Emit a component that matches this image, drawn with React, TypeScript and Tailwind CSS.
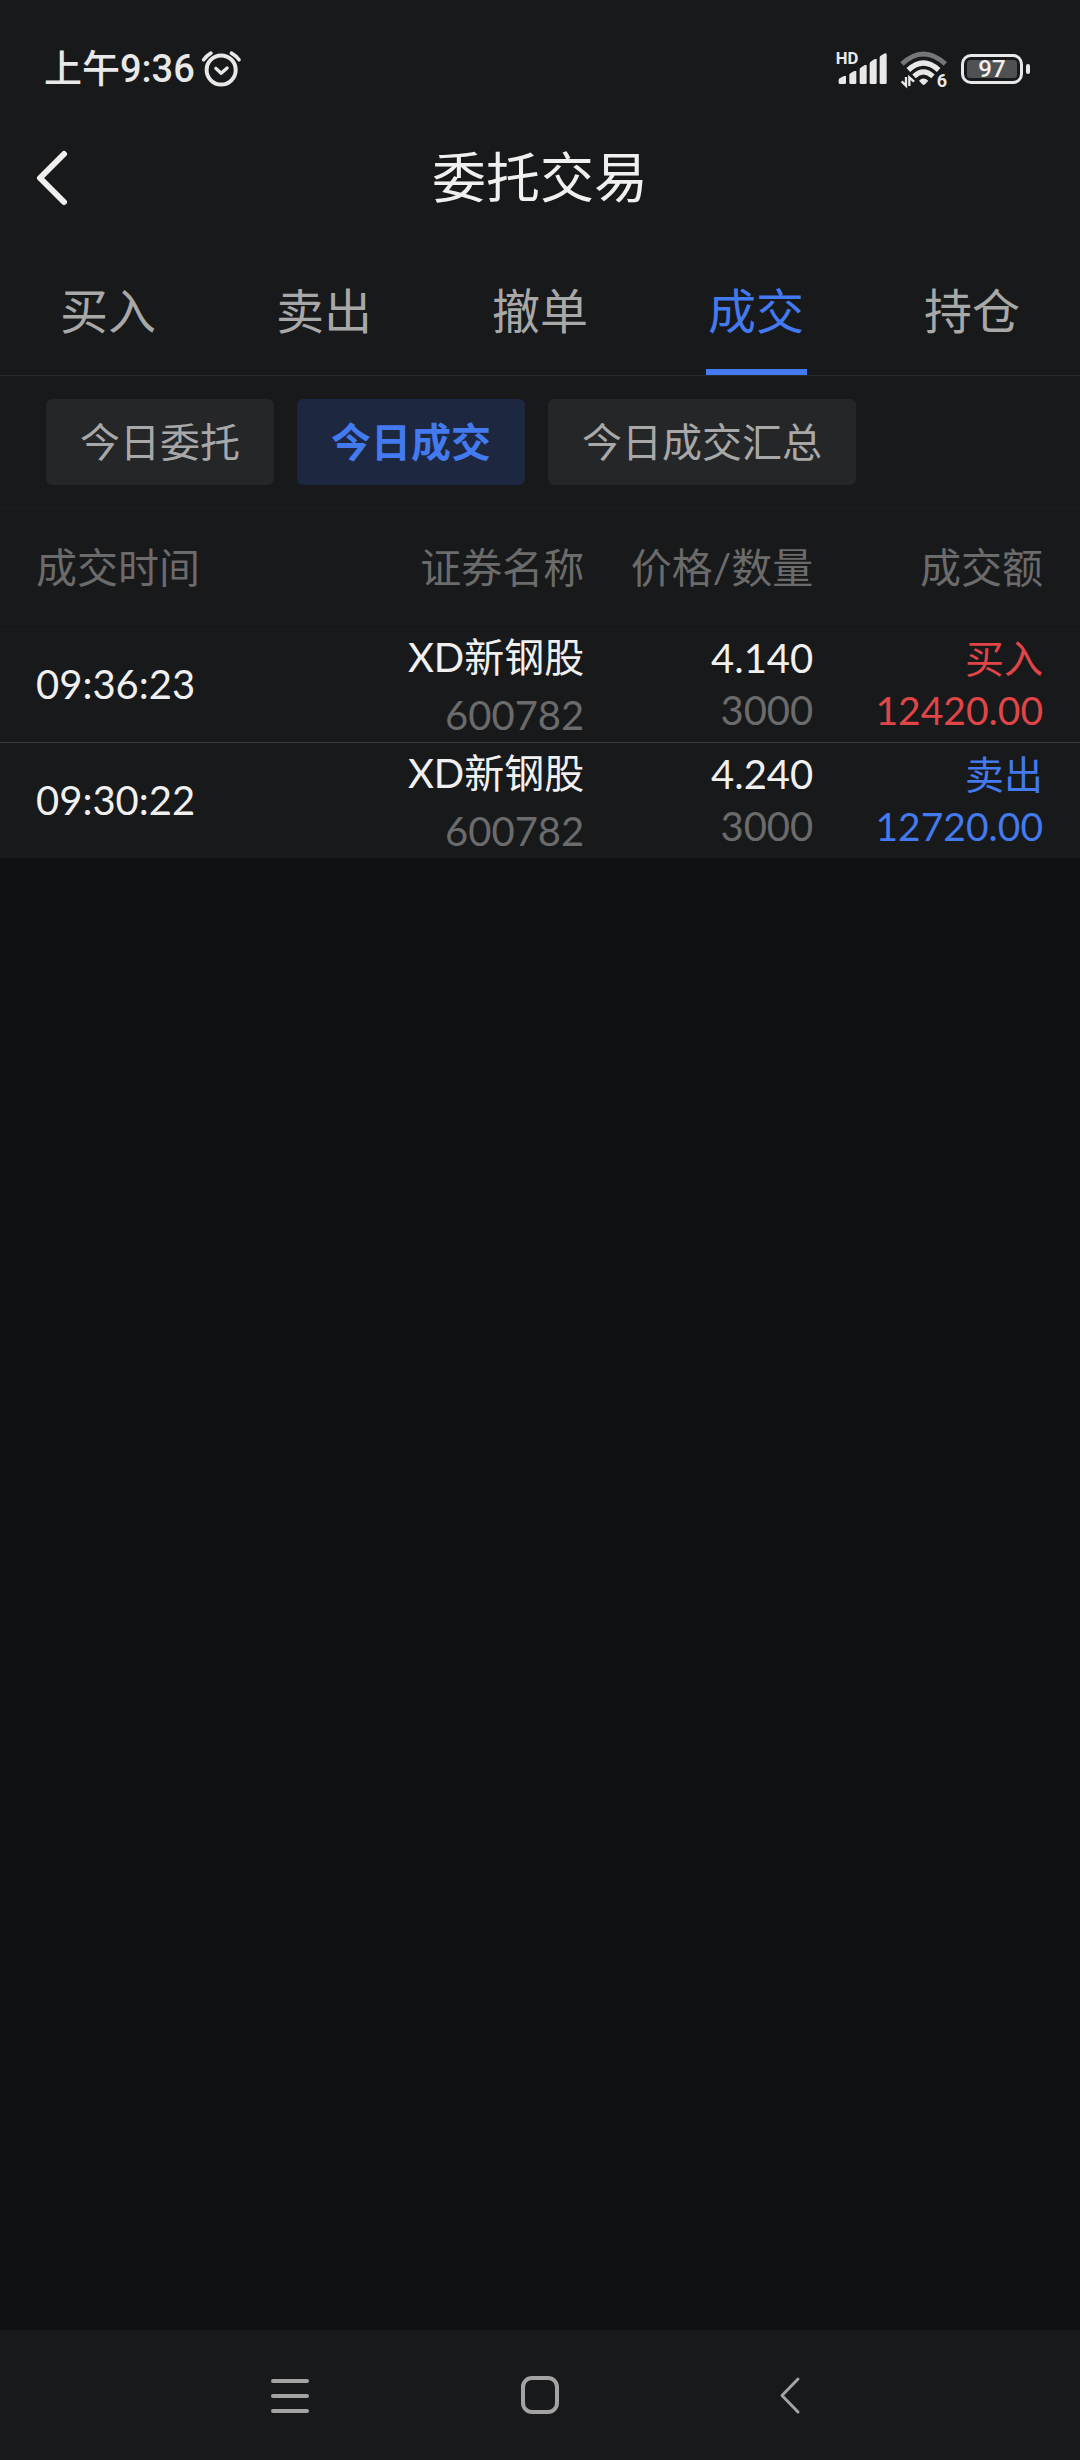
import React, { useState } from "react";

const tabs = ["买入", "卖出", "撤单", "成交", "持仓"];
const filters = ["今日委托", "今日成交", "今日成交汇总"];

type Trade = {
  time: string;
  name: string;
  code: string;
  price: string;
  quantity: string;
  side: string;
  amount: string;
};

const trades: Trade[] = [
  { time: "09:36:23", name: "XD新钢股", code: "600782", price: "4.140", quantity: "3000", side: "买入", amount: "12420.00" },
  { time: "09:30:22", name: "XD新钢股", code: "600782", price: "4.240", quantity: "3000", side: "卖出", amount: "12720.00" },
];

function AlarmIcon() {
  return (
    <svg viewBox="606 56 124 114" className="h-[38px] w-[41px]" fill="none" stroke="#e8e8e8" strokeLinecap="round" aria-hidden="true">
      <circle cx="667" cy="116" r="44" strokeWidth="12" />
      <path d="M614 85q10-13 22-20M698 65q14 8 23 20" strokeWidth="11" />
      <path d="M651 111l16 15 18-16" strokeWidth="10" strokeLinejoin="round" />
    </svg>
  );
}

function SignalIcon() {
  return (
    <svg viewBox="104 45 162 144" className="h-12 w-[54px]" fill="#e8e8e8" aria-hidden="true">
      <path d="M118 151q0-4 3-6l13-7h6v20q0 4-4 4h-14q-4 0-4-4z" />
      <path d="M150 136q0-4 3-6l12-7h6v35q0 4-4 4h-13q-4 0-4-4z" />
      <path d="M181 119q0-4 3-6l12-8h6v53q0 4-4 4h-13q-4 0-4-4z" />
      <path d="M211 101q0-4 3-6l12-8h6v71q0 4-4 4h-13q-4 0-4-4z" />
      <path d="M241 83q0-4 3-6l10-6q8-4 8 3v84q0 4-4 4h-13q-4 0-4-4z" />
      <text x="109" y="102" fontSize="50" fontWeight="700" fontFamily="Roboto, sans-serif">HD</text>
    </svg>
  );
}

function WifiIcon() {
  return (
    <svg viewBox="298 45 147 144" className="h-12 w-[49px]" fill="none" stroke="#e8e8e8" aria-hidden="true">
      <path d="M304 102q64-60 130 0" stroke="#757678" strokeWidth="15" />
      <path d="M323 120q45-42 91 0" strokeWidth="16" />
      <path d="M340 139q28-27 57 0" strokeWidth="15" />
      <path d="M355 152q13-13 28 0l-10 11q-4 4-8 0z" fill="#e8e8e8" stroke="none" />
      <path d="M316 141v26l-13-13M326 168v-26l14 13" strokeWidth="7" />
      <text x="408" y="170" fontSize="54" fontWeight="700" fill="#e8e8e8" stroke="none" fontFamily="Roboto, sans-serif">6</text>
    </svg>
  );
}

function Battery() {
  return (
    <div className="flex items-center gap-[3px]">
      <div className="h-[30px] w-[62px] rounded-[10px] border-3 border-[#e8e8e8] p-[3px]">
        <div className="flex h-full items-center justify-center rounded-[3px] bg-[#505153] text-[24px] leading-none font-medium text-[#f0f0f0]">
          97
        </div>
      </div>
      <div className="h-[10px] w-1 rounded-full bg-[#e8e8e8]" />
    </div>
  );
}

function StatusBar() {
  return (
    <div className="flex h-[138px] items-center justify-between pr-[50px] pl-11 font-[Roboto,'Noto_Sans_CJK_SC',sans-serif] text-[#e8e8e8]">
      <div className="flex items-center gap-[6px] text-[38px] leading-none font-medium">
        <span>上午9:36</span>
        <AlarmIcon />
      </div>
      <div className="flex items-center gap-3">
        <SignalIcon />
        <WifiIcon />
        <Battery />
      </div>
    </div>
  );
}

function TradeTable() {
  return (
    <table className="w-full table-fixed border-collapse bg-[#18191b] text-[40px] text-[#f0f0f0]">
      <colgroup>
        <col className="w-[28%]" />
        <col className="w-[26.1%]" />
        <col />
        <col className="w-[24.7%]" />
      </colgroup>
      <thead>
        <tr className="h-[117px] border-b border-[#131416] text-[41px] text-[#6b6b6b]">
          <th scope="col" className="pl-9 text-left font-normal">成交时间</th>
          <th scope="col" className="text-right font-normal">证券名称</th>
          <th scope="col" className="text-right font-normal">价格/数量</th>
          <th scope="col" className="pr-[37px] text-right font-normal">成交额</th>
        </tr>
      </thead>
      <tbody>
        {trades.map((t) => {
          const tone = t.side === "买入" ? "text-[#e04547]" : "text-[#437af0]";
          return (
            <tr key={t.time} className="h-[116px] border-b border-[#38393b] last:border-b-0">
              <td className="pl-9">{t.time}</td>
              <td className="pt-1 text-right leading-[52px]">
                <div>{t.name}</div>
                <div className="mt-[6px] text-[#6b6b6b]">{t.code}</div>
              </td>
              <td className="text-right leading-[52px]">
                <div>{t.price}</div>
                <div className="text-[#6b6b6b]">{t.quantity}</div>
              </td>
              <td className={`pr-[37px] text-right text-[39px] leading-[52px] ${tone}`}>
                <div>{t.side}</div>
                <div>{t.amount}</div>
              </td>
            </tr>
          );
        })}
      </tbody>
    </table>
  );
}

function SystemNav() {
  return (
    <div className="flex h-[130px] items-center justify-center bg-[#18191b]">
      <button type="button" aria-label="最近任务" className="flex h-full w-[250px] items-center justify-center">
        <svg viewBox="0 0 40 40" className="size-10" stroke="#a3a3a3" strokeWidth="4" strokeLinecap="round" aria-hidden="true">
          <path d="M3 6h34M3 21h34M3 36h34" />
        </svg>
      </button>
      <button type="button" aria-label="主屏幕" className="flex h-full w-[250px] items-center justify-center">
        <svg viewBox="0 0 40 40" className="size-10" fill="none" stroke="#a3a3a3" strokeWidth="4" aria-hidden="true">
          <rect x="3" y="3" width="34" height="34" rx="9" />
        </svg>
      </button>
      <button type="button" aria-label="返回" className="flex h-full w-[250px] items-center justify-center">
        <svg viewBox="0 0 40 40" className="size-10" fill="none" stroke="#a3a3a3" strokeWidth="3" strokeLinecap="round" strokeLinejoin="round" aria-hidden="true">
          <path d="M28 4L12 20.5 28 37" />
        </svg>
      </button>
    </div>
  );
}

export default function App() {
  const [tab, setTab] = useState("成交");
  const [filter, setFilter] = useState("今日成交");

  return (
    <div className="flex min-h-screen flex-col bg-[#101113] font-[Lato,'Noto_Sans_CJK_SC',sans-serif]">
      <header className="bg-[#18191b]">
        <StatusBar />
        <div className="grid h-20 grid-cols-[1fr_auto_1fr] items-center px-8">
          <button type="button" aria-label="返回" className="w-10">
            <svg viewBox="0 0 40 60" className="h-15 w-10" fill="none" stroke="#f0f0f0" strokeWidth="6" strokeLinecap="round" strokeLinejoin="round" aria-hidden="true">
              <path d="M32 6L8 30 32 54" />
            </svg>
          </button>
          <h1 className="text-[54px] leading-none text-[#f0f0f0]">委托交易</h1>
        </div>
        <nav className="grid grid-cols-5 border-b border-[#2a2b2d]">
          {tabs.map((t) => (
            <button
              key={t}
              type="button"
              onClick={() => setTab(t)}
              className={`flex h-[157px] flex-col items-center justify-end text-[48px] ${t === tab ? "text-[#437af0]" : "text-[#a8a8a8]"}`}
            >
              <span className="leading-[116px]">{t}</span>
              <span className={`h-[6px] w-[101px] ${t === tab ? "bg-[#437af0]" : ""}`} />
            </button>
          ))}
        </nav>
        <div className="flex gap-[23px] border-b border-[#1c1d1f] px-[46px] py-[23px]">
          {filters.map((f) => (
            <button
              key={f}
              type="button"
              onClick={() => setFilter(f)}
              className={`h-[86px] rounded-md px-[34px] text-[40px] leading-none ${
                f === filter ? "bg-[#1d2740] font-bold text-[#437af0]" : "bg-[#252628] text-[#a8a8a8]"
              }`}
            >
              {f}
            </button>
          ))}
        </div>
      </header>
      <main className="flex-1">
        <TradeTable />
      </main>
      <SystemNav />
    </div>
  );
}
